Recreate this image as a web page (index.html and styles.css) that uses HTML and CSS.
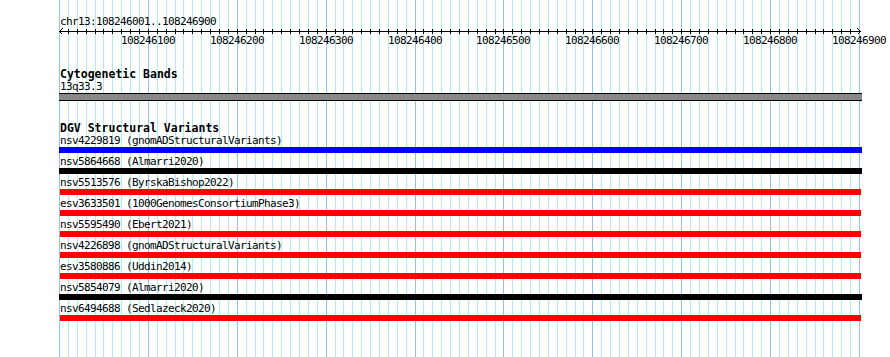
FILE: index.html
```html
<!DOCTYPE html>
<html>
<head>
<meta charset="utf-8">
<title>chr13:108246001..108246900</title>
<link rel="stylesheet" href="styles.css">
</head>
<body>
<div class="canvas">
  <div class="pos">chr13:108246001..108246900</div>
  <svg class="axis" width="803" height="7" viewBox="0 0 803 7" shape-rendering="crispEdges">
    <defs>
      <pattern id="ticks" width="80" height="5" patternUnits="userSpaceOnUse">
        <path d="M0.5 0v5M9.5 0v5M18.5 0v5M27.5 0v5M36.5 0v5M44.5 0v5M53.5 0v5M62.5 0v5M71.5 0v5" stroke="#000" fill="none"/>
      </pattern>
    </defs>
    <rect x="4" y="1" width="794" height="5" fill="url(#ticks)"/>
    <path d="M0 3.5H802M3.5 0.5L0.5 3.5L3.5 6.5M798.5 0.5L801.5 3.5L798.5 6.5" stroke="#000" fill="none"/>
  </svg>
  <div class="scale">
    <span>108246100</span>
    <span>108246200</span>
    <span>108246300</span>
    <span class="short">108246400</span>
    <span>108246500</span>
    <span>108246600</span>
    <span>108246700</span>
    <span>108246800</span>
    <span>108246900</span>
  </div>

  <section class="track cyto">
    <div class="track-title">Cytogenetic Bands</div>
    <div class="label band-name">13q33.3</div>
    <div class="band"></div>
  </section>

  <section class="track dgv">
    <div class="track-title">DGV Structural Variants</div>
    <div class="sv-list">
      <div class="sv"><div class="label">nsv4229819 (gnomADStructuralVariants)</div><div class="bar blue"></div></div>
      <div class="sv"><div class="label">nsv5864668 (Almarri2020)</div><div class="bar black"></div></div>
      <div class="sv"><div class="label">nsv5513576 (ByrskaBishop2022)</div><div class="bar red"></div></div>
      <div class="sv"><div class="label">esv3633501 (1000GenomesConsortiumPhase3)</div><div class="bar red"></div></div>
      <div class="sv"><div class="label">nsv5595490 (Ebert2021)</div><div class="bar red"></div></div>
      <div class="sv"><div class="label">nsv4226898 (gnomADStructuralVariants)</div><div class="bar red"></div></div>
      <div class="sv"><div class="label">esv3580886 (Uddin2014)</div><div class="bar red"></div></div>
      <div class="sv"><div class="label">nsv5854079 (Almarri2020)</div><div class="bar black"></div></div>
      <div class="sv"><div class="label">nsv6494688 (Sedlazeck2020)</div><div class="bar red"></div></div>
    </div>
  </section>
</div>
</body>
</html>
```

FILE: styles.css
```css
html, body {
  margin: 0;
  padding: 0;
  background: #fff;
}

.canvas {
  --dark: #8cc6ea;
  --light: #aeeef2;
  margin-left: 59px;
  width: 802px;
  height: 357px;
  box-sizing: border-box;
  padding-top: 16px;
  font-family: "DejaVu Sans Mono", "Liberation Mono", monospace;
  font-size: 11px;
  letter-spacing: -0.62px;
  line-height: 11px;
  color: #000;
  white-space: nowrap;
  background:
    linear-gradient(var(--dark), var(--dark)) 0 0 / 1px 100% no-repeat,
    linear-gradient(var(--dark), var(--dark)) 89px 0 / 1px 100% no-repeat,
    linear-gradient(var(--dark), var(--dark)) 178px 0 / 1px 100% no-repeat,
    linear-gradient(var(--dark), var(--dark)) 267px 0 / 1px 100% no-repeat,
    linear-gradient(var(--dark), var(--dark)) 356px 0 / 1px 100% no-repeat,
    linear-gradient(var(--dark), var(--dark)) 444px 0 / 1px 100% no-repeat,
    linear-gradient(var(--dark), var(--dark)) 533px 0 / 1px 100% no-repeat,
    linear-gradient(var(--dark), var(--dark)) 622px 0 / 1px 100% no-repeat,
    linear-gradient(var(--dark), var(--dark)) 711px 0 / 1px 100% no-repeat,
    linear-gradient(var(--dark), var(--dark)) 800px 0 / 1px 100% no-repeat,
    linear-gradient(to right,
      var(--light) 0 1px, transparent 1px 9px,
      var(--light) 9px 10px, transparent 10px 18px,
      var(--light) 18px 19px, transparent 19px 27px,
      var(--light) 27px 28px, transparent 28px 36px,
      var(--light) 36px 37px, transparent 37px 44px,
      var(--light) 44px 45px, transparent 45px 53px,
      var(--light) 53px 54px, transparent 54px 62px,
      var(--light) 62px 63px, transparent 63px 71px,
      var(--light) 71px 72px, transparent 72px 80px) 0 0 / 80px 100% repeat-x;
}

.pos {
  padding-left: 1px;
}

.axis {
  display: block;
  margin-top: 1px;
  overflow: visible;
}

.scale {
  display: flex;
  padding-left: 62px;
}

.scale span {
  flex: 0 0 89px;
}

.scale .short {
  flex-basis: 88px;
}

.track-title {
  font-weight: bold;
  font-size: 11.5px;
  letter-spacing: 0;
  line-height: 12px;
  padding-left: 1px;
}

.label {
  padding-left: 1px;
}

.cyto {
  margin-top: 22px;
}

.band-name {
  margin-top: 1px;
}

.band {
  margin-top: 1px;
  width: 803px;
  height: 6px;
  background: #888;
  border-top: 1px solid #000;
  border-bottom: 1px solid #000;
}

.dgv {
  margin-top: 21px;
}

.sv-list {
  display: flex;
  flex-direction: column;
  gap: 3px;
  margin-top: 1px;
}

.sv {
  display: flex;
  flex-direction: column;
  gap: 1px;
}

.bar {
  height: 6px;
  width: 803px;
}

.bar.blue {
  background: #0000ff;
}

.bar.black {
  background: #000;
}

.bar.red {
  background: #ff0000;
  width: 801px;
  margin-left: 1px;
}
```
